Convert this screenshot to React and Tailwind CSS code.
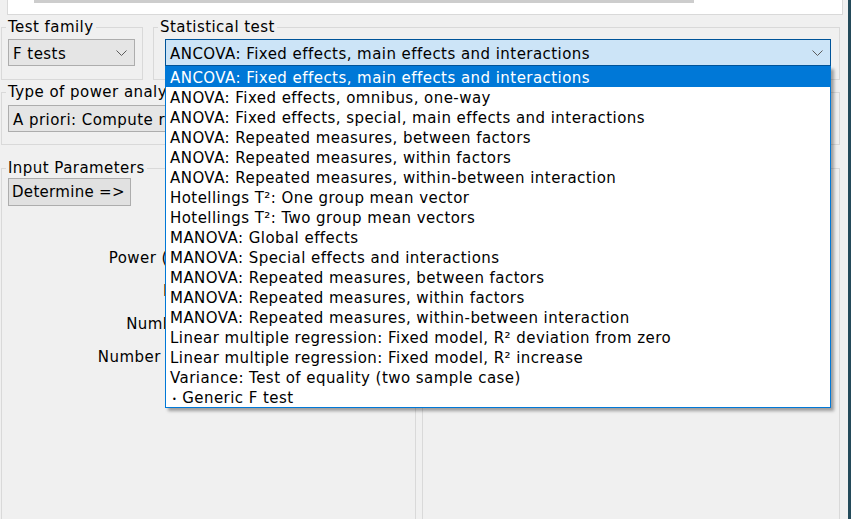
import { useState } from "react";

const tests = [
  "ANCOVA: Fixed effects, main effects and interactions",
  "ANOVA: Fixed effects, omnibus, one-way",
  "ANOVA: Fixed effects, special, main effects and interactions",
  "ANOVA: Repeated measures, between factors",
  "ANOVA: Repeated measures, within factors",
  "ANOVA: Repeated measures, within-between interaction",
  "Hotellings T²: One group mean vector",
  "Hotellings T²: Two group mean vectors",
  "MANOVA: Global effects",
  "MANOVA: Special effects and interactions",
  "MANOVA: Repeated measures, between factors",
  "MANOVA: Repeated measures, within factors",
  "MANOVA: Repeated measures, within-between interaction",
  "Linear multiple regression: Fixed model, R² deviation from zero",
  "Linear multiple regression: Fixed model, R² increase",
  "Variance: Test of equality (two sample case)",
  "• Generic F test",
];

const inputs = [
  ["Effect size f", "0.25"],
  ["α err prob", "0.05"],
  ["Power (1-β err prob)", "0.95"],
  ["Numerator df", "10"],
  ["Number of groups", "5"],
  ["Number of covariates", "1"],
];

const outputs = [
  ["Noncentrality parameter λ", "26.8125000"],
  ["Critical F", "1.8714692"],
  ["Denominator df", "423"],
  ["Total sample size", "429"],
  ["Actual power", "0.9500190"],
];

// small down chevron used by the combo boxes
const Chevron = () => (
  <svg width="11" height="6" viewBox="0 0 11 6" className="shrink-0">
    <path d="M0.5 0.5 L5.5 5.5 L10.5 0.5" stroke="#5c5c5c" fill="none" strokeWidth="1" />
  </svg>
);

// etched titled border, like a Swing TitledBorder
const Group = ({ title, className, children }) => (
  <div className={`relative border border-[#d9d9d9] ${className}`}>
    <span className="absolute -top-[10px] left-[4px] px-[2px] bg-[#f0f0f0] leading-[18px] whitespace-nowrap">
      {title}
    </span>
    {children}
  </div>
);

const Combo = ({ value, className }) => (
  <div
    className={`h-[27px] flex items-center justify-between pl-[4px] pr-[7px] border whitespace-nowrap overflow-hidden ${className}`}
  >
    <span className="pt-[3px] leading-[17px]">{value}</span>
    <Chevron />
  </div>
);

// the bullet of the last entry is drawn small, as the Swing list does
const ItemText = ({ text }) =>
  text.startsWith("• ") ? (
    <>
      <span className="text-[8px] pl-[2px] pr-[5px] relative -top-[1px]">•</span>
      {text.slice(2)}
    </>
  ) : (
    text
  );

export default function App() {
  const [selected, setSelected] = useState(0);

  return (
    <div
      className="w-[851px] h-[519px] bg-[#f0f0f0] overflow-hidden flex text-[15px] tracking-[0.45px] text-black"
      style={{ fontFamily: "'DejaVu Sans', 'Liberation Sans', sans-serif" }}
    >
      <div className="w-[848px] flex flex-col">
        {/* top panel, scrolled off */}
        <div className="ml-[7px] w-[836px] h-[15px] shrink-0 bg-white border-x border-b border-[#d9d9d9]">
          <div className="ml-[26px] w-[660px] h-[3px] bg-[#cdcdcd]" />
        </div>

        {/* Test family / Statistical test */}
        <div className="flex pl-[1px] mt-[12px] shrink-0">
          <Group title="Test family" className="w-[142px] h-[53px] pl-[6px] pt-[11px]">
            <Combo value="F tests" className="w-[127px] bg-[#e5e5e5] border-[#adadad]" />
          </Group>
          <Group title="Statistical test" className="ml-[10px] w-[687px] h-[53px] pl-[11px] pt-[11px]">
            <div className="relative w-[666px]">
              <Combo value={tests[selected]} className="w-[666px] bg-[#cce4f7] border-[#005499]" />
              {/* open popup list */}
              <ul className="absolute left-0 top-[27px] w-[666px] z-10 bg-white border border-[#0078d7] shadow-[3px_3px_3px_rgba(0,0,0,0.35)]">
                {tests.map((t, i) => (
                  <li
                    key={t}
                    onClick={() => setSelected(i)}
                    className={`h-[20px] pt-[3px] leading-[17px] pl-[4px] whitespace-nowrap ${
                      i === selected ? "bg-[#0078d7] text-white" : ""
                    }`}
                  >
                    <ItemText text={t} />
                  </li>
                ))}
              </ul>
            </div>
          </Group>
        </div>

        {/* Type of power analysis */}
        <div className="flex pl-[1px] mt-[12px] shrink-0">
          <Group title="Type of power analysis" className="w-[839px] h-[53px] pl-[6px] pt-[12px]">
            <Combo
              value="A priori: Compute required sample size – given α, power, and effect size"
              className="w-[700px] bg-[#e5e5e5] border-[#adadad]"
            />
          </Group>
        </div>

        {/* Input / Output parameters */}
        <div className="flex pl-[1px] mt-[23px] shrink-0">
          <Group title="Input Parameters" className="w-[415px] h-[400px] pl-[6px] pt-[6px]">
            {inputs.map(([label, value], i) => (
              <div key={label} className="h-[33px] flex items-center">
                <div className="w-[261px] flex items-center justify-between">
                  {i === 0 ? (
                    <div className="w-[123px] h-[28px] flex items-center pl-[3px] pt-[2px] bg-[#e1e1e1] border border-[#adadad] tracking-[0.3px]">
                      Determine =&gt;
                    </div>
                  ) : (
                    <span />
                  )}
                  <span className="whitespace-nowrap pt-[2px]">{label}</span>
                </div>
                <div className="ml-[8px] w-[130px] h-[24px] bg-white border border-[#adadad] text-right pr-[4px] leading-[22px]">
                  {value}
                </div>
              </div>
            ))}
          </Group>
          <Group title="Output Parameters" className="ml-[6px] w-[418px] h-[400px] pl-[6px] pt-[6px]">
            {outputs.map(([label, value]) => (
              <div key={label} className="h-[33px] flex items-center">
                <span className="w-[250px] text-right whitespace-nowrap">{label}</span>
                <div className="ml-[10px] w-[140px] h-[24px] bg-white border border-[#adadad] text-right pr-[4px] leading-[22px]">
                  {value}
                </div>
              </div>
            ))}
          </Group>
        </div>
      </div>
      <div className="w-[3px] bg-[#244a5a]" />
    </div>
  );
}
